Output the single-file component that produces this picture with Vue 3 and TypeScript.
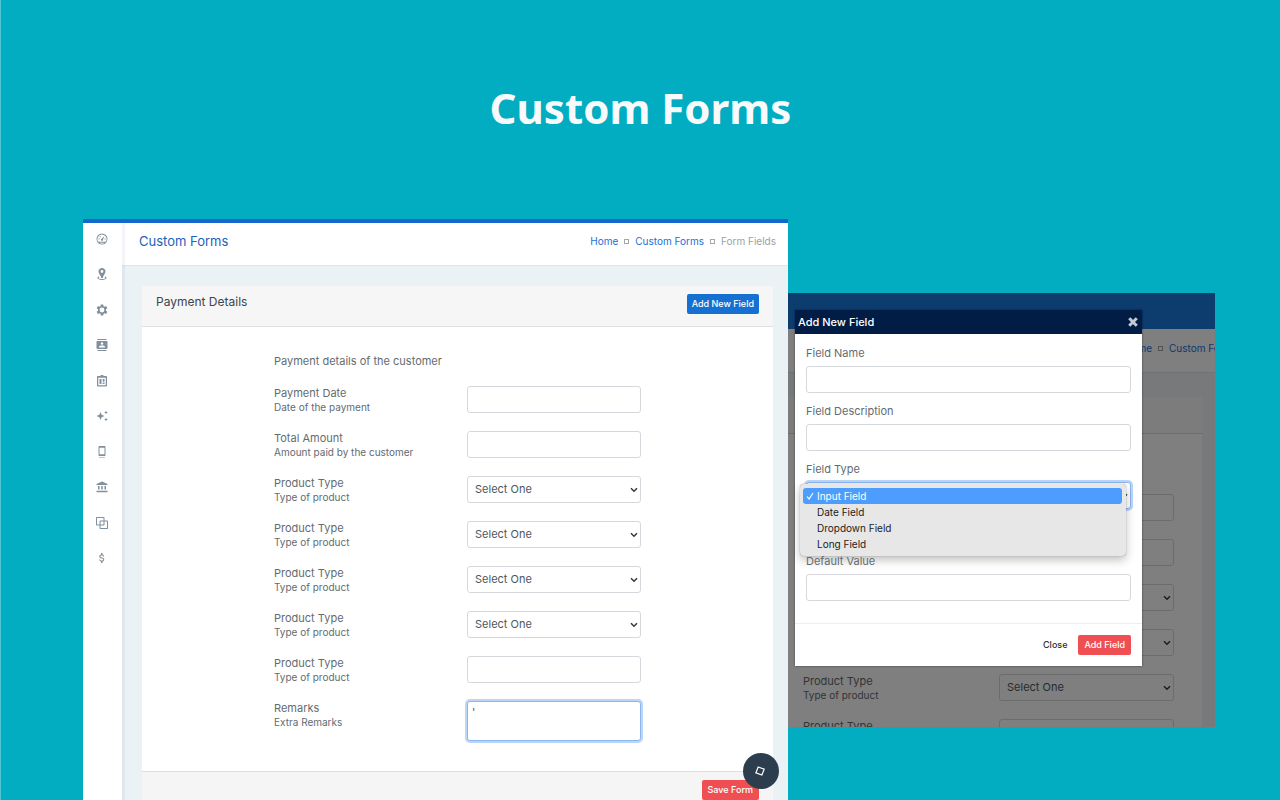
<script setup lang="ts">
import { ref } from 'vue'

type Kind = 'input' | 'select' | 'textarea'

interface Field {
  id: string
  label: string
  hint: string
  kind: Kind
}

interface NavIcon {
  name: string
  path: string
}

const navIcons: NavIcon[] = [
  { name: 'Dashboard', path: 'M12 1a11 11 0 1 0 0 22a11 11 0 1 0 0-22zm0 1.8a9.2 9.2 0 0 1 7.2 14.9H4.800A9.200 9.200 0 0 1 12 2.800zM16.800 6.200l-6 5.600a2 2 0 1 0 2.800 2.500zM5 11h2v2H5zm12 0h2v2h-2zM7.500 6.500h2v2h-2zM6.700 19.500h10.600A9.200 9.200 0 0 1 6.700 19.500z' },
  { name: 'Locations', path: 'M12 0C8.100 0 5 3 5 6.900c0 4.500 4.500 7 5.500 13.100h3c1-6.100 5.500-8.600 5.500-13.100C19 3 15.900 0 12 0zm0 4.200a2.800 2.800 0 1 1 0 5.600a2.800 2.800 0 1 1 0-5.600zM6 17.200c-2.300.8-3 1.600-3 2.500C3 22.500 7 24 12 24s9-1.500 9-4.300c0-.9-.7-1.700-3-2.500l-.6 1.800c1 .3 1.400.6 1.400.9 0 1.100-3 2.100-6.800 2.100s-6.800-1-6.800-2.100c0-.3.4-.6 1.400-.9z' },
  { name: 'Settings', path: 'M9.500 1h5l.6 3.400 1.800 1L20.200 4l2.500 4.300-2.700 2.300v2.800l2.700 2.300-2.500 4.300-3.300-1.400-1.800 1-.6 3.400h-5l-.6-3.400-1.800-1L3.800 20l-2.500-4.300L4 13.400v-2.800L1.300 8.300 3.800 4l3.300 1.400 1.800-1zM12 7.200a4.800 4.800 0 1 0 0 9.600a4.800 4.800 0 1 0 0-9.600z' },
  { name: 'Contacts', path: 'M21 0H3v2h18V0zM3 24h18v-2H3v2zM21 4H3c-1.100 0-2 .9-2 2v12c0 1.100.9 2 2 2h18c1.100 0 2-.9 2-2V6c0-1.100-.9-2-2-2zm-9 2.500a2.500 2.500 0 1 1 0 5a2.500 2.500 0 1 1 0-5zM18 17H6v-1.500c0-1.670 4-2.500 6-2.500s6 .83 6 2.500V17z' },
  { name: 'Assignments', path: 'M4 2h5a3 3 0 0 1 6 0h5c1.100 0 2 .9 2 2v17c0 1.100-.9 2-2 2H4c-1.100 0-2-.9-2-2V4c0-1.100.9-2 2-2zm.500 3.500v15h15v-15zM7 8h4v10H7zm6.500 0H17v5.500h-3.500zm0 7H17v3h-3.500z' },
  { name: 'Highlights', path: 'M9 4l2.300 5.700L17 12l-5.700 2.300L9 20l-2.300-5.700L1 12l5.700-2.300zM20 1l1.200 2.800L24 5l-2.800 1.200L20 9l-1.200-2.800L16 5l2.800-1.200zM20 15l1.200 2.800L24 19l-2.800 1.200L20 23l-1.200-2.800L16 19l2.800-1.200z' },
  { name: 'Mobile', path: 'M7 24h2v-2H7v2zm4 0h2v-2h-2v2zm4 0h2v-2h-2v2zM17 0H7C5.900 0 5 .9 5 2v16c0 1.100.9 2 2 2h10c1.100 0 2-.9 2-2V2c0-1.100-.9-2-2-2zM17 16.500H7v-13h10v13z' },
  { name: 'Bank', path: 'M4 10v7h3v-7H4zm6.500 0v7h3v-7h-3zM1 22.500h22V19.500H1v3zM17 10v7h3v-7h-3zM12 1L1 6v2.200h22V6z' },
  { name: 'Copies', path: 'M2 0h13c1.100 0 2 .9 2 2v5h5c1.100 0 2 .9 2 2v13c0 1.100-.9 2-2 2H9c-1.100 0-2-.9-2-2v-5H2c-1.100 0-2-.9-2-2V2C0 .9.9 0 2 0zm0 2v13h5V9c0-1.100.9-2 2-2h6V2zm7 7v6h6V9zm8 0v6c0 1.100-.9 2-2 2H9v5h13V9z' },
  { name: 'Billing', path: 'M11.800 10.900c-2.270-.59-3-1.200-3-2.150 0-1.090 1.010-1.850 2.700-1.850 1.780 0 2.440.85 2.500 2.100h2.210c-.07-1.720-1.120-3.300-3.210-3.810V2h-3v3.160c-1.940.42-3.500 1.680-3.500 3.610 0 2.310 1.910 3.460 4.700 4.130 2.500.6 3 1.480 3 2.410 0 .69-.49 1.790-2.700 1.790-2.060 0-2.870-.92-2.980-2.100h-2.200c.12 2.190 1.760 3.420 3.680 3.830V22h3v-3.150c1.950-.37 3.500-1.500 3.500-3.550 0-2.840-2.430-3.810-4.700-4.400z' }
]

const productType = (id: string, kind: Kind): Field => ({
  id, label: 'Product Type', hint: 'Type of product', kind
})

const fields: Field[] = [
  { id: 'payment-date', label: 'Payment Date', hint: 'Date of the payment', kind: 'input' },
  { id: 'total-amount', label: 'Total Amount', hint: 'Amount paid by the customer', kind: 'input' },
  productType('product-1', 'select'),
  productType('product-2', 'select'),
  productType('product-3', 'select'),
  productType('product-4', 'select'),
  productType('product-5', 'input'),
  { id: 'remarks', label: 'Remarks', hint: 'Extra Remarks', kind: 'textarea' }
]

const backFields: Field[] = fields.slice(0, 6).map((f) => ({ ...f, id: 'back-' + f.id }))

const fieldTypes = ['Input Field', 'Date Field', 'Dropdown Field', 'Long Field']
const fieldType = ref('Input Field')
const remarks = ref("'")
</script>

<template>
  <main class="stage">
    <h1 class="hero">Custom Forms</h1>

    <div class="screens">
      <section class="app">
        <nav class="side" aria-label="Main">
          <div class="side-list">
            <a v-for="icon in navIcons" :key="icon.name" href="#" :aria-label="icon.name">
              <svg viewBox="0 0 24 24" width="12" height="12"><path :d="icon.path" fill="currentColor" fill-rule="evenodd" /></svg>
            </a>
          </div>
        </nav>

        <div class="content">
          <header class="topbar">
            <h2>Custom Forms</h2>
            <nav class="crumbs" aria-label="Breadcrumb">
              <a href="#">Home</a><i></i><a href="#">Custom Forms</a><i></i><span>Form Fields</span>
            </nav>
          </header>

          <form class="card" @submit.prevent>
            <div class="card-head">
              <h3>Payment Details</h3>
              <button type="button" class="btn blue">Add New Field</button>
            </div>
            <div class="card-body">
              <p>Payment details of the customer</p>
              <div v-for="f in fields" :key="f.id" class="row">
                <label :for="f.id">{{ f.label }}<small>{{ f.hint }}</small></label>
                <input v-if="f.kind === 'input'" :id="f.id" type="text" class="control" />
                <textarea v-else-if="f.kind === 'textarea'" :id="f.id" v-model="remarks" class="control area focus"></textarea>
                <div v-else class="pick">
                  <select :id="f.id" class="control"><option>Select One</option></select>
                  <svg viewBox="0 0 8 6" width="8" height="6"><path d="M1 1.200l3 3 3-3" /></svg>
                </div>
              </div>
            </div>
            <div class="card-foot"><button type="submit" class="btn red">Save Form</button></div>
          </form>
        </div>

        <button type="button" class="fab" aria-label="Customize">
          <svg viewBox="0 0 12 12" width="12" height="12"><path d="M4.200 2l6 2.200-2.300 5.800-6-2.200z" /></svg>
        </button>
      </section>

      <section class="popup-screen">
        <div class="back" aria-hidden="true">
          <div class="back-nav"></div>
          <div class="back-top">
            <nav class="crumbs">
              <a href="#">Home</a><i></i><a href="#">Custom Forms</a>
            </nav>
          </div>
          <div class="back-card">
            <div class="back-head"></div>
            <div class="back-body">
              <div v-for="f in backFields" :key="f.id" class="row">
                <label :for="f.id">{{ f.label }}<small>{{ f.hint }}</small></label>
                <input v-if="f.kind === 'input'" :id="f.id" type="text" class="control" tabindex="-1" />
                <div v-else class="pick">
                  <select :id="f.id" class="control" tabindex="-1"><option>Select One</option></select>
                  <svg viewBox="0 0 8 6" width="8" height="6"><path d="M1 1.200l3 3 3-3" /></svg>
                </div>
              </div>
            </div>
          </div>
        </div>
        <div class="shade"></div>

        <form class="modal" role="dialog" aria-labelledby="modal-title" @submit.prevent>
          <header>
            <h2 id="modal-title">Add New Field</h2>
            <button type="button" class="close-x" aria-label="Close dialog">
              <svg viewBox="0 0 10 10" width="10" height="10"><path d="M2.300 2.300l5.400 5.400M7.700 2.300l-5.400 5.400" /></svg>
            </button>
          </header>
          <div class="modal-body">
            <div class="field">
              <label for="field-name">Field Name</label>
              <input id="field-name" type="text" class="control" />
            </div>
            <div class="field">
              <label for="field-desc">Field Description</label>
              <input id="field-desc" type="text" class="control" />
            </div>
            <div class="field open">
              <label for="field-type">Field Type</label>
              <div class="pick">
                <select id="field-type" v-model="fieldType" class="control focus">
                  <option v-for="t in fieldTypes" :key="t">{{ t }}</option>
                </select>
                <svg viewBox="0 0 8 6" width="8" height="6"><path d="M1 1.200l3 3 3-3" /></svg>
              </div>
              <ul class="menu" role="listbox" aria-label="Field Type">
                <li v-for="t in fieldTypes" :key="t" role="option" :aria-selected="t === fieldType" :class="{ on: t === fieldType }" @click="fieldType = t">
                  <svg v-if="t === fieldType" viewBox="0 0 8 8" width="8" height="8"><path d="M1 4.500l2 2.500 4-6" /></svg>
                  <span>{{ t }}</span>
                </li>
              </ul>
            </div>
            <div class="field">
              <label for="default-value">Default Value</label>
              <input id="default-value" type="text" class="control" />
            </div>
          </div>
          <footer>
            <button type="button" class="btn plain">Close</button>
            <button type="submit" class="btn red">Add Field</button>
          </footer>
        </form>
      </section>
    </div>
  </main>
</template>

<style>
body {
  margin: 0;
  background: #02adc1;
}
</style>

<style scoped>
* {
  box-sizing: border-box;
}

.stage {
  display: flex;
  flex-direction: column;
  min-height: 100vh;
  border-left: 1px solid #4fc5d3;
  background: #02adc1;
  color: #646b6f;
  font: 11px/14px Inter, "Liberation Sans", sans-serif;
}

h1, h2, h3, p, ul {
  margin: 0;
  padding: 0;
  font-weight: 400;
}

a {
  color: #1a6fd8;
  text-decoration: none;
}

.hero {
  padding: 78px 0 81px;
  color: #f8f9fa;
  font: 700 42px/60px "Noto Sans", "Open Sans", sans-serif;
  text-align: center;
}

.screens {
  flex: 1;
  display: grid;
  grid-template-columns: 705fr 427fr;
  padding: 0 65px 0 82px;
}

.app {
  position: relative;
  display: flex;
  border-top: 4px solid #1467cc;
  background: #eaf2f6;
}

.side {
  position: relative;
  width: 39px;
  padding: 10px 0 0 13px;
  background: #fff;
  box-shadow: 3px 0 0 rgba(20, 60, 130, 0.05);
}

.side-list {
  display: flex;
  flex-direction: column;
  justify-content: space-between;
  height: 331px;
}

.side a {
  display: block;
  height: 12px;
  color: #82909d;
}

.side svg {
  display: block;
}

.content {
  flex: 1;
  display: flex;
  flex-direction: column;
  min-width: 0;
}

.topbar {
  display: flex;
  align-items: center;
  justify-content: space-between;
  height: 43px;
  padding: 0 12px 6px 17px;
  border-bottom: 1px solid #dfe6ea;
  background: #fff;
}

.topbar h2 {
  color: #1a62bb;
  font-size: 13px;
  line-height: 20px;
}

.crumbs {
  display: flex;
  align-items: center;
  font-size: 10px;
  white-space: nowrap;
  color: #9a9fa4;
}

.crumbs i {
  flex: none;
  width: 5px;
  height: 5px;
  margin: 1px 6px 0;
  border: 1px solid #a2a7ab;
}

.card {
  flex: 1;
  display: flex;
  flex-direction: column;
  margin: 20px 15px 0 20px;
  border-radius: 2px 2px 0 0;
  background: #fff;
}

.card-head {
  display: flex;
  align-items: flex-start;
  justify-content: space-between;
  height: 41px;
  padding: 8px 14px 0;
  border-bottom: 1px solid #dfe1e3;
  background: #f6f6f7;
}

.card-head h3 {
  color: #3e454d;
  font-size: 12px;
  line-height: 16px;
}

.card-body {
  flex: 1;
  padding: 27px 132px 24px;
}

.card-body p {
  margin-bottom: 18px;
}

.row {
  display: grid;
  grid-template-columns: 193px 1fr;
  align-items: start;
  min-height: 45px;
}

small {
  display: block;
  font-size: 10px;
}

.control {
  display: block;
  width: 100%;
  height: 27px;
  padding: 0 7px 2px;
  border: 1px solid #d5d9dd;
  border-radius: 3px;
  outline: 0;
  background: #fff;
  color: #4f565c;
  font: inherit;
  appearance: none;
}

.area {
  height: 40px;
  padding: 3px 4px;
  resize: none;
}

.focus {
  border-color: #8bb6ef;
  box-shadow: 0 0 0 2px #bcd6fa;
}

.pick {
  position: relative;
}

.pick svg {
  position: absolute;
  right: 3px;
  top: 11px;
  fill: none;
  stroke: #33393e;
  stroke-width: 1.500;
}

.card-foot {
  display: flex;
  justify-content: flex-end;
  padding: 8px 14px 0;
  border-top: 1px solid #dcdfe3;
  background: #f5f5f5;
}

.btn {
  height: 20px;
  padding: 0 6px;
  border: 0;
  border-radius: 2px;
  color: #fff;
  font: 500 9px/20px Inter, "Liberation Sans", sans-serif;
}

.blue {
  padding: 0 5px;
  background: #1570d2;
}

.red {
  background: #ef4f53;
}

.plain {
  background: none;
  color: #2c3033;
}

.fab {
  position: absolute;
  right: 9px;
  bottom: 11px;
  display: grid;
  place-items: center;
  width: 36px;
  height: 36px;
  padding: 0 3px 0 0;
  border: 0;
  border-radius: 50%;
  background: #2c3e4d;
}

.fab path {
  fill: none;
  stroke: #fff;
  stroke-width: 1.200;
}

.popup-screen {
  position: relative;
  align-self: start;
  height: 434px;
  margin-top: 74px;
  overflow: hidden;
}

.back {
  background: #eef2f5;
}

.back-nav {
  height: 36px;
  background: #1b79df;
}

.back-top {
  display: flex;
  justify-content: flex-end;
  height: 44px;
  padding-top: 12px;
  border-bottom: 1px solid #dfe6ea;
  background: #fff;
}

.back-top .crumbs {
  width: 91px;
  height: 14px;
  overflow: hidden;
}

.back-card {
  margin: 24px 13px 0 0;
  background: #fff;
}

.back-head {
  height: 37px;
  border-bottom: 1px solid #d5d9dd;
  background: #f8f8f8;
}

.back-body {
  padding: 60px 28px 0 15px;
}

.back-body .row {
  grid-template-columns: 196px 1fr;
}

.shade {
  position: absolute;
  inset: 0;
  background: rgba(0, 0, 0, 0.5);
}

.modal {
  position: absolute;
  top: 17px;
  left: 7px;
  right: 73px;
  background: #fff;
  box-shadow: 0 0 2px rgba(0, 0, 0, 0.5);
}

.modal header {
  display: flex;
  align-items: center;
  justify-content: space-between;
  height: 24px;
  padding: 0 4px 0 3px;
  background: #011c45;
}

.modal header h2 {
  color: #fff;
  font-size: 11px;
  font-weight: 500;
}

.close-x {
  height: 10px;
  padding: 0;
  border: 0;
  background: none;
}

.close-x svg {
  display: block;
}

.close-x path {
  stroke: #c3cbd6;
  stroke-width: 3;
  stroke-linecap: square;
}

.modal-body {
  padding: 11px 11px 22px;
}

.field {
  position: relative;
  margin-bottom: 10px;
}

.field:last-child {
  margin-bottom: 0;
}

.field.open {
  margin-bottom: 44px;
}

.field label {
  display: block;
  margin-bottom: 5px;
  line-height: 16px;
}

.menu {
  position: absolute;
  top: 23px;
  left: -6px;
  right: 5px;
  padding: 4px 4px 4px 3px;
  border-radius: 4px;
  background: #e7e7e7;
  box-shadow: 0 0 1px rgba(0, 0, 0, 0.5), 0 4px 10px rgba(0, 0, 0, 0.25);
  color: #1c1c1c;
  font-size: 10px;
  line-height: 16px;
  list-style: none;
}

.menu li {
  display: grid;
  grid-template-columns: 14px 1fr;
  align-items: center;
  height: 16px;
  border-radius: 3px;
}

.menu span {
  grid-column: 2;
}

.menu .on {
  background: #4c9dfd;
  color: #fff;
}

.menu svg {
  grid-row: 1;
  margin-left: 3px;
  fill: none;
  stroke: #fff;
  stroke-width: 1.200;
}

.modal footer {
  display: flex;
  align-items: center;
  justify-content: flex-end;
  gap: 5px;
  height: 43px;
  padding-right: 11px;
  border-top: 1px solid #eceeef;
}
</style>
